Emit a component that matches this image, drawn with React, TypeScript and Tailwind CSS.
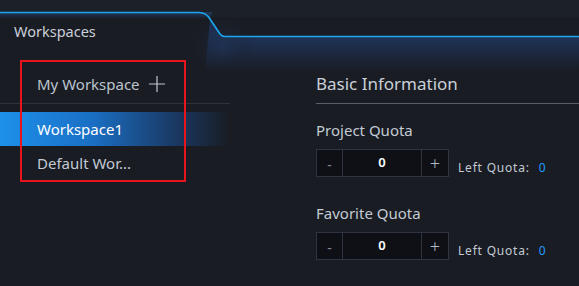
import { Plus } from "lucide-react";

const font = { fontFamily: '"Noto Sans", "Open Sans", sans-serif' };

function HeaderArt() {
  return (
    <svg
      className="absolute left-0 top-0"
      width="579"
      height="74"
      viewBox="0 0 579 74"
    >
      <defs>
        <linearGradient id="tabBand" x1="0" y1="12" x2="0" y2="19" gradientUnits="userSpaceOnUse">
          <stop offset="0" stopColor="#24395f" />
          <stop offset="1" stopColor="#191c23" />
        </linearGradient>
        <linearGradient id="under" x1="0" y1="37" x2="0" y2="72" gradientUnits="userSpaceOnUse">
          <stop offset="0" stopColor="#1f3358" />
          <stop offset="1" stopColor="#191c23" />
        </linearGradient>
        <radialGradient id="glow" cx="222" cy="46" r="34" gradientUnits="userSpaceOnUse">
          <stop offset="0" stopColor="#1f3358" stopOpacity="0.6" />
          <stop offset="1" stopColor="#191c23" stopOpacity="0" />
        </radialGradient>
      </defs>
      <rect x="0" y="0" width="579" height="17" fill="#1c2029" />
      <rect x="0" y="17" width="579" height="57" fill="#191c23" />
      <rect x="0" y="12" width="212" height="8" fill="url(#tabBand)" />
      <path d="M210 19 L220 34 C221.5 36 222.5 36.5 225 36.5 H579 V74 H205 Z" fill="url(#under)" />
      <ellipse cx="222" cy="46" rx="34" ry="26" fill="url(#glow)" />
      <path
        d="M0 12.5 H199 C204 12.5 207 14 210 19 L220 34 C221.5 36 222.5 36.5 225 36.5 H579"
        fill="none"
        stroke="#1aa6f0"
        strokeWidth="1.6"
      />
    </svg>
  );
}

function Stepper() {
  return (
    <div className="flex h-[28px] border border-[#2e3440] bg-[#0e1015]">
      <button className="flex w-[26px] items-center justify-center border-r border-[#2e3440] pt-[2px] text-[14px] text-[#7f8894]">
        -
      </button>
      <div className="flex w-[79px] items-center justify-center border-r border-[#2e3440] text-[13px] font-semibold text-white">
        0
      </div>
      <button className="flex w-[26px] items-center justify-center text-[18px] font-light text-[#b4bcc6]">
        +
      </button>
    </div>
  );
}

function QuotaField({ label }: { label: string }) {
  return (
    <div>
      <div className="h-[20px] text-[15px] leading-[20px] text-[#c3cad4]">
        {label}
      </div>
      <div className="mt-[9px] flex items-end">
        <Stepper />
        <div className="mb-[1px] ml-[9px] text-[12px] leading-[16px] tracking-[0.8px] text-[#c3cad4]">
          Left Quota:<span className="ml-[9px] text-[#1e9bff]">0</span>
        </div>
      </div>
    </div>
  );
}

export default function App() {
  return (
    <div
      className="relative h-[286px] w-[579px] overflow-hidden bg-[#191c23]"
      style={font}
    >
      {/* Header tab */}
      <div className="relative h-[52px]">
        <HeaderArt />
        <div className="relative pl-[14px] pt-[21px] text-[14.5px] leading-[20px] text-[#c9d0da]">
          Workspaces
        </div>
      </div>

      <div className="flex">
        {/* Workspace list */}
        <aside className="relative w-[230px] pt-[15px]">
          <div className="flex h-[34px] items-center gap-[4px] pl-[37px] text-[15px] text-[#bcc4ce]">
            My Workspace
            <Plus className="h-[26px] w-[26px] text-[#c3cad4]" strokeWidth={1.1} />
          </div>
          <div className="mt-[2px] h-px bg-[#2b333e]" />
          <div className="mt-[8px] flex h-[34px] items-center bg-[linear-gradient(90deg,#1d90ea_0%,#1a6fc4_40%,#1a3a66_75%,rgba(25,28,35,0)_100%)] pl-[37px] text-[15px] text-white">
            Workspace1
          </div>
          <div className="flex h-[34px] items-center pl-[37px] text-[15px] text-[#c3cad4]">
            Default Wor...
          </div>

          {/* annotation box */}
          <div className="absolute left-[20px] top-[8px] h-[122px] w-[166px] border-2 border-[#e8141c]" />
        </aside>

        {/* Basic information */}
        <section className="flex-1 pl-[86px] pt-[15px]">
          <div className="flex h-[34px] items-center text-[17px] text-[#c9d0d8]">
            Basic Information
          </div>
          <div className="mt-[2px] h-px bg-[#5a6069]" />
          <div className="mt-[16px]">
            <QuotaField label="Project Quota" />
          </div>
          <div className="mt-[26px]">
            <QuotaField label="Favorite Quota" />
          </div>
        </section>
      </div>
    </div>
  );
}
